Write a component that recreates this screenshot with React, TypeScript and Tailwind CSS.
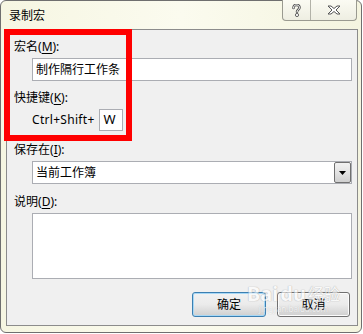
import React from "react";

const font = "font-['Noto_Sans','Noto_Sans_CJK_SC',sans-serif]";

function Label({ pre, k }: { pre: string; k: string }) {
  return (
    <div className="h-[16px] text-[12px] leading-[16px] text-black">
      {pre}(<span className="underline underline-offset-2">{k}</span>):
    </div>
  );
}

export default function App() {
  return (
    <div className={`w-[363px] h-[334px] bg-white ${font}`}>
      <div className="relative w-[362px] h-[333px] rounded-[6px] border border-[#6f6f6f] bg-gradient-to-r from-[#f6f6e2] via-[#fbfbef] to-[#f4f4df] flex flex-col">
        {/* title bar */}
        <div className="h-[28px] flex items-start justify-between">
          <div className="pl-[8px] pt-[7px] text-[12px] leading-[16px] text-black">录制宏</div>
          <div className="flex mr-[4px] -mt-[1px] h-[21px] border border-t-0 border-[#9a9a90] rounded-b-[4px] bg-gradient-to-b from-[#fbfbf3] to-[#eeeee2] overflow-hidden">
            <div className="w-[28px] h-full flex items-center justify-center border-r border-[#b2b2a8]">
              <svg width="9" height="13" viewBox="0 0 9 13">
                <path d="M1.5 4 C1.5 1.5 3 1 4.5 1 C6.5 1 7.5 2.2 7.5 3.6 C7.5 5.5 5 5.8 5 7.8" fill="none" stroke="#555" strokeWidth="2.6" strokeLinecap="round" />
                <path d="M1.5 4 C1.5 1.5 3 1 4.5 1 C6.5 1 7.5 2.2 7.5 3.6 C7.5 5.5 5 5.8 5 7.8" fill="none" stroke="#fff" strokeWidth="1" strokeLinecap="round" />
                <circle cx="5" cy="11" r="1.6" fill="#fff" stroke="#555" strokeWidth="0.9" />
              </svg>
            </div>
            <div className="w-[45px] h-full flex items-center justify-center">
              <svg width="14" height="10" viewBox="0 0 14 10">
                <path d="M1 1 L4 1 L7 3.5 L10 1 L13 1 L9 5 L13 9 L10 9 L7 6.5 L4 9 L1 9 L5 5 Z" fill="#fff" stroke="#555" strokeWidth="1" strokeLinejoin="round" />
              </svg>
            </div>
          </div>
        </div>

        {/* client area */}
        <div className="mx-[5px] mr-[3px] border border-[#8c8c8c] bg-[#f0f0f0] flex flex-col pl-[7px] pr-[5px] pt-[9px] pb-[8px]">
          <Label pre="宏名" k="M" />
          <div className="mt-[3px] ml-[18px] h-[23px] border border-[#abadb3] bg-white flex items-center pl-[3px] text-[12px] text-black">
            制作隔行工作条
          </div>

          <div className="mt-[9px]">
            <Label pre="快捷键" k="K" />
          </div>
          <div className="mt-[3px] ml-[18px] flex items-center h-[22px]">
            <span className="text-[12px] leading-[16px] text-black tracking-[0.3px]">Ctrl+Shift+</span>
            <div className="ml-[4px] w-[24px] h-[22px] border border-[#abadb3] bg-white flex items-center pl-[4px] text-[13px] text-black">
              W
            </div>
          </div>

          <div className="mt-[11px]">
            <Label pre="保存在" k="I" />
          </div>
          <div className="mt-[3px] ml-[18px] h-[23px] border border-[#abadb3] bg-white flex items-center justify-between pl-[3px] text-[12px] text-black">
            <span>当前工作簿</span>
            <div className="w-[17px] h-[21px] border border-[#707070] rounded-[2px] bg-gradient-to-b from-[#f2f2f2] via-[#e3e3e3] to-[#cfcfcf] flex items-center justify-center">
              <svg width="7" height="4" viewBox="0 0 7 4">
                <path d="M0 0 L7 0 L3.5 4 Z" fill="#000" />
              </svg>
            </div>
          </div>

          <div className="mt-[10px]">
            <Label pre="说明" k="D" />
          </div>
          <div className="mt-[3px] ml-[18px] h-[66px] border border-[#abadb3] bg-white" />

          <div className="mt-[13px] flex justify-end gap-[11px] pr-[2px]">
            <div className="w-[74px] h-[25px] rounded-[3px] border border-[#3c7fb1] bg-gradient-to-b from-[#f2f2f2] via-[#ebebeb] to-[#cfcfcf] shadow-[inset_0_0_0_1px_#a7d8f6] flex items-center justify-center text-[12px] text-black">
              确定
            </div>
            <div className="w-[73px] h-[25px] rounded-[3px] border border-[#707070] bg-gradient-to-b from-[#f2f2f2] via-[#ebebeb] to-[#cfcfcf] shadow-[inset_0_0_0_1px_#fcfcfc] flex items-center justify-center text-[12px] text-black">
              取消
            </div>
          </div>
        </div>

        {/* annotation red box */}
        <div className="absolute left-[3px] top-[28px] w-[128px] h-[112px] border-[6px] border-[#ff0000] pointer-events-none" />

        {/* watermark */}
        <div className="absolute left-[246px] top-[283px] flex flex-col items-center pointer-events-none opacity-60">
          <div className="flex items-end text-[20px] leading-[20px] font-bold text-white [text-shadow:0_0_1px_#999,0_0_1px_#999]">
            <span>Bai</span>
            <span className="ml-[2px]">du</span>
            <span className="ml-[2px] text-[16px] font-normal">经验</span>
          </div>
          <div className="text-[8px] leading-[9px] text-white [text-shadow:0_0_1px_#999]">jingyan.baidu.com</div>
        </div>
      </div>
    </div>
  );
}
